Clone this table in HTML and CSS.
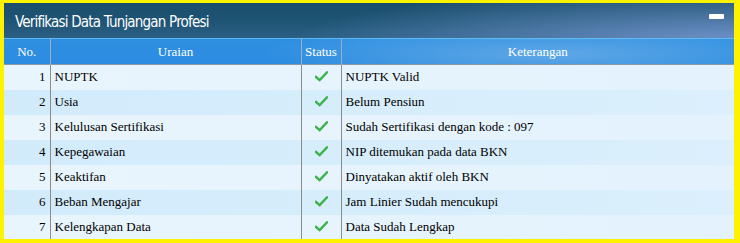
FILE: index.html
```html
<!DOCTYPE html>
<html>
<head>
<meta charset="utf-8">
<link rel="stylesheet" href="styles.css">
</head>
<body>
<div class="frame">
  <div class="panel">
    <div class="titlebar">
      <span class="title">Verifikasi Data Tunjangan Profesi</span>
      <span class="minimize"></span>
    </div>
    <table class="grid">
      <colgroup>
        <col class="c-no"><col class="c-ur"><col class="c-st"><col class="c-kt">
      </colgroup>
      <thead>
        <tr><th>No.</th><th>Uraian</th><th>Status</th><th>Keterangan</th></tr>
      </thead>
      <tbody>
        <tr><td class="no">1</td><td>NUPTK</td><td class="st"><svg class="ok" viewBox="0 0 14 12"><path d="M1 6.5 L5 10 L13 1.5" /></svg></td><td>NUPTK Valid</td></tr>
        <tr><td class="no">2</td><td>Usia</td><td class="st"><svg class="ok" viewBox="0 0 14 12"><path d="M1 6.5 L5 10 L13 1.5" /></svg></td><td>Belum Pensiun</td></tr>
        <tr><td class="no">3</td><td>Kelulusan Sertifikasi</td><td class="st"><svg class="ok" viewBox="0 0 14 12"><path d="M1 6.5 L5 10 L13 1.5" /></svg></td><td>Sudah Sertifikasi dengan kode : 097</td></tr>
        <tr><td class="no">4</td><td>Kepegawaian</td><td class="st"><svg class="ok" viewBox="0 0 14 12"><path d="M1 6.5 L5 10 L13 1.5" /></svg></td><td>NIP ditemukan pada data BKN</td></tr>
        <tr><td class="no">5</td><td>Keaktifan</td><td class="st"><svg class="ok" viewBox="0 0 14 12"><path d="M1 6.5 L5 10 L13 1.5" /></svg></td><td>Dinyatakan aktif oleh BKN</td></tr>
        <tr><td class="no">6</td><td>Beban Mengajar</td><td class="st"><svg class="ok" viewBox="0 0 14 12"><path d="M1 6.5 L5 10 L13 1.5" /></svg></td><td>Jam Linier Sudah mencukupi</td></tr>
        <tr><td class="no">7</td><td>Kelengkapan Data</td><td class="st"><svg class="ok" viewBox="0 0 14 12"><path d="M1 6.5 L5 10 L13 1.5" /></svg></td><td>Data Sudah Lengkap</td></tr>
      </tbody>
    </table>
  </div>
</div>
</body>
</html>
```

FILE: styles.css
```css
html, body {
  margin: 0;
  padding: 0;
  background: #fff200;
}
.frame {
  width: 740px;
  height: 243px;
  box-sizing: border-box;
  padding: 3px 6px 4px 4px;
  background: #fff200;
}
.panel {
  width: 730px;
  height: 236px;
  overflow: hidden;
  background: #e6f4fd;
}
.titlebar {
  height: 35px;
  display: flex;
  align-items: center;
  justify-content: space-between;
  padding: 0 10px 0 11px;
  background:
    radial-gradient(ellipse 60% 140% at 100% 100%, rgba(110,145,200,0.95) 0%, rgba(110,145,200,0) 100%),
    linear-gradient(180deg, #1c4e6c 0%, #1d5373 45%, #2b5f84 100%);
}
.title {
  display: inline-block;
  color: #ffffff;
  font-family: "DejaVu Sans", sans-serif;
  font-stretch: condensed;
  font-size: 15px;
  letter-spacing: -0.8px;
  padding-top: 2px;
  white-space: nowrap;
}
.minimize {
  width: 15px;
  height: 5px;
  background: #ffffff;
  border-radius: 1px;
  margin-top: -8px;
}
.grid {
  width: 730px;
  border-collapse: collapse;
  table-layout: fixed;
  font-family: "Liberation Serif", serif;
  font-size: 13px;
  color: #000;
}
.grid th, .grid td {
  font-family: "Liberation Serif", serif;
}
.c-no { width: 46px; }
.c-ur { width: 251px; }
.c-st { width: 40px; }
.c-kt { width: 393px; }
.grid thead tr {
  height: 26px;
  background:
    radial-gradient(ellipse 40% 120% at 75% 60%, rgba(100,170,230,0.9) 0%, rgba(100,170,230,0) 100%),
    linear-gradient(180deg, #2f90e2 0%, #2a8be0 100%);
  border-top: 1px solid #5cbaf2;
  border-bottom: 1px solid #8a9aa8;
}
.grid th {
  font-weight: normal;
  color: #ffffff;
  text-align: center;
  padding: 0;
  border-left: 1px solid #9ab0c4;
}
.grid th:first-child { border-left: none; }
.grid tbody tr {
  height: 25px;
  background: linear-gradient(90deg, #e9f5fd 0%, #e3f2fd 100%);
}
.grid tbody tr:nth-child(even) {
  background: linear-gradient(90deg, #d2ebfb 0%, #dbeffc 100%);
}
.grid td {
  padding: 0 4px;
  border-left: 1px solid #8c8c8c;
  white-space: nowrap;
  vertical-align: middle;
}
.grid td:first-child { border-left: none; }
.grid td.no { text-align: right; padding-right: 4px; }
.grid td.st { text-align: center; padding: 0; }
.ok {
  width: 13px;
  height: 11px;
  display: inline-block;
  vertical-align: middle;
  margin-top: -4px;
}
.ok path {
  fill: none;
  stroke: #3cb34a;
  stroke-width: 2.6;
  stroke-linecap: square;
}
```
